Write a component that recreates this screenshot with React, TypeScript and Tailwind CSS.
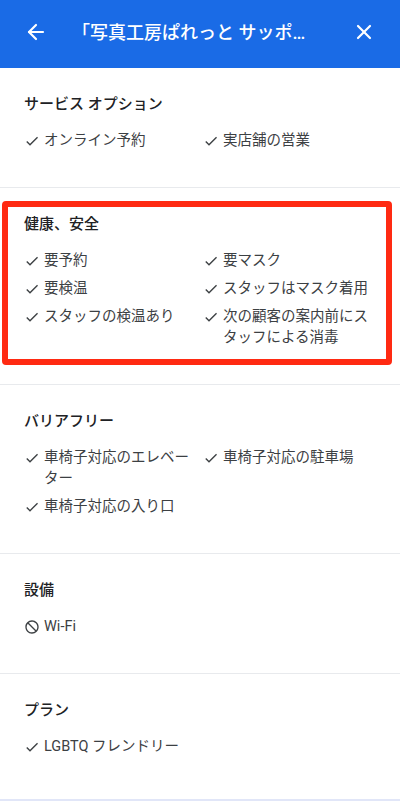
import { ArrowLeft, X } from "lucide-react"

type Item = { label: string; available?: boolean }

type Section = { title: string; items: Item[]; highlight?: boolean }

const sections: Section[] = [
  {
    title: "サービス オプション",
    items: [{ label: "オンライン予約" }, { label: "実店舗の営業" }],
  },
  {
    title: "健康、安全",
    highlight: true,
    items: [
      { label: "要予約" },
      { label: "要マスク" },
      { label: "要検温" },
      { label: "スタッフはマスク着用" },
      { label: "スタッフの検温あり" },
      { label: "次の顧客の案内前にスタッフによる消毒" },
    ],
  },
  {
    title: "バリアフリー",
    items: [
      { label: "車椅子対応のエレベーター" },
      { label: "車椅子対応の駐車場" },
      { label: "車椅子対応の入り口" },
    ],
  },
  {
    title: "設備",
    items: [{ label: "Wi-Fi", available: false }],
  },
  {
    title: "プラン",
    items: [{ label: "LGBTQ フレンドリー" }],
  },
]

function CheckIcon() {
  return (
    <svg viewBox="0 0 24 24" className="w-4 h-4" fill="currentColor">
      <path d="M9 16.17L4.83 12l-1.42 1.41L9 19 21 7l-1.41-1.41z" />
    </svg>
  )
}

function BlockIcon() {
  return (
    <svg viewBox="0 0 24 24" className="w-4 h-4" fill="currentColor">
      <path d="M12 2C6.48 2 2 6.48 2 12s4.48 10 10 10 10-4.48 10-10S17.52 2 12 2zm0 18c-4.42 0-8-3.58-8-8 0-1.85.63-3.55 1.69-4.9L16.9 18.31C15.55 19.37 13.85 20 12 20zm6.31-3.1L7.1 5.69C8.45 4.63 10.15 4 12 4c4.42 0 8 3.58 8 8 0 1.85-.63 3.55-1.69 4.9z" />
    </svg>
  )
}

export default function App() {
  return (
    <div
      className="w-[400px] min-h-[801px] bg-white text-[#202124]"
      style={{ fontFamily: 'Roboto, "Noto Sans CJK JP", sans-serif' }}
    >
      <header className="h-[68px] bg-[#1a6be6] text-white flex items-center px-6 pb-1">
        <ArrowLeft className="w-6 h-6 shrink-0" strokeWidth={2.2} />
        {/* title is cut with an ellipsis, as in the app */}
        <h1 className="flex-1 min-w-0 ml-6 mr-10 text-[18px] font-medium truncate">
          「写真工房ぱれっと サッポロファクトリー店」の設備とサービス
        </h1>
        <X className="w-6 h-6 shrink-0" strokeWidth={2.2} />
      </header>

      {sections.map((section, i) => (
        <section
          key={section.title}
          className={
            "relative px-6 pt-[26px] " +
            (i === sections.length - 1
              ? "pb-[42px]"
              : "pb-[36px] border-b border-[#e8eaed]")
          }
        >
          <h2 className="text-[15px] leading-[21px] font-medium mb-[15px]">
            {section.title}
          </h2>
          <div className="grid grid-cols-2 gap-x-1.5 gap-y-[7px]">
            {section.items.map((item) => (
              <div
                key={item.label}
                className="flex items-start gap-1 text-[14.5px] leading-[21px] text-[#3c4043]"
              >
                <span className="h-[21px] flex items-center shrink-0">
                  {item.available === false ? <BlockIcon /> : <CheckIcon />}
                </span>
                <span className="min-w-0">{item.label}</span>
              </div>
            ))}
          </div>
          {section.highlight && (
            <div className="absolute left-[2px] top-[13px] w-[390px] h-[164px] border-[6px] border-[#ff2a12] rounded-[4px] pointer-events-none" />
          )}
        </section>
      ))}
      <div className="h-[2px] bg-[#e1e6f8]" />
    </div>
  )
}
